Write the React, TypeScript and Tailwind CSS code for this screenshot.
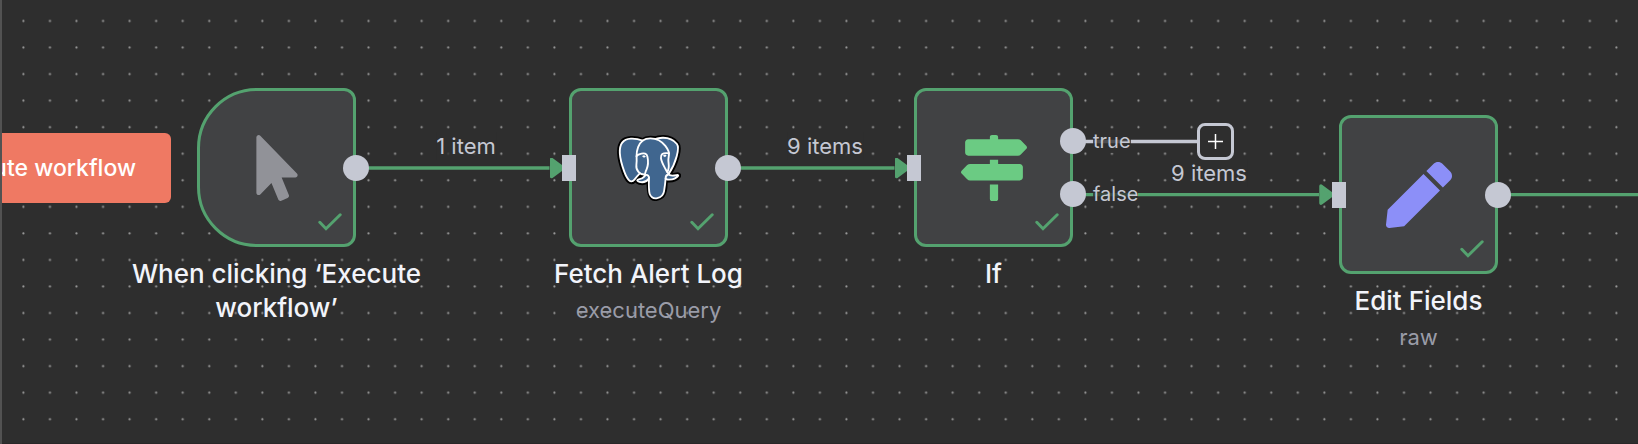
import type { ReactNode } from 'react';
import { FaMapSigns, FaMousePointer, FaPen } from 'react-icons/fa';

function PostgresIcon() {
  return (
    <svg viewBox="0 0 432 445" className="h-[66px] w-16" aria-hidden="true">
      <path
        fill="#000"
        stroke="#000"
        strokeWidth="37.4"
        d="M323.205,324.227c2.833-23.601,1.984-27.062,19.563-23.239l4.463,0.392c13.517,0.615,31.199-2.174,41.587-7c22.362-10.376,35.622-27.7,13.572-23.148c-50.297,10.376-53.755-6.655-53.755-6.655c53.111-78.803,75.313-178.836,56.149-203.322C352.514-5.534,262.036,26.049,260.522,26.869l-0.482,0.089c-9.938-2.062-21.06-3.294-33.554-3.496c-22.761-0.374-40.032,5.967-53.133,15.904c0,0-161.408-66.498-153.899,83.628c1.597,31.936,45.777,241.655,98.47,178.31c19.259-23.163,37.871-42.748,37.871-42.748c9.242,6.14,20.307,9.272,31.912,8.147l0.897-0.765c-0.281,2.876-0.157,5.689,0.359,9.019c-13.572,15.167-9.584,17.83-36.723,23.416c-27.457,5.659-11.326,15.734-0.797,18.367c12.768,3.193,42.305,7.716,62.268-20.224l-0.795,3.188c5.325,4.26,4.965,30.619,5.72,49.452c0.756,18.834,2.017,36.409,5.856,46.771c3.839,10.36,8.369,37.05,44.036,29.406c29.809-6.388,52.6-15.582,54.677-101.107"
      />
      <path
        fill="#40668f"
        d="M402.395,271.23c-50.302,10.376-53.76-6.655-53.76-6.655c53.111-78.808,75.313-178.843,56.153-203.326c-52.27-66.785-142.752-35.2-144.262-34.38l-0.486,0.087c-9.938-2.063-21.06-3.292-33.56-3.496c-22.761-0.373-40.026,5.967-53.127,15.902c0,0-161.411-66.495-153.904,83.63c1.597,31.938,45.776,241.657,98.471,178.312c19.26-23.163,37.869-42.748,37.869-42.748c9.243,6.14,20.308,9.272,31.908,8.147l0.901-0.765c-0.28,2.876-0.152,5.689,0.361,9.019c-13.575,15.167-9.586,17.83-36.723,23.416c-27.459,5.659-11.328,15.734-0.796,18.367c12.768,3.193,42.307,7.716,62.266-20.224l-0.796,3.188c5.319,4.26,9.054,27.711,8.428,48.969c-0.626,21.259-1.044,35.854,3.147,47.254c4.191,11.4,8.368,37.05,44.042,29.406c29.809-6.388,45.256-22.942,47.405-50.555c1.525-19.631,4.976-16.729,5.194-34.28l2.768-8.309c3.192-26.611,0.507-35.196,18.872-31.203l4.463,0.392c13.517,0.615,31.208-2.174,41.591-7c22.358-10.376,35.618-27.7,13.573-23.148z"
      />
      <g fill="none" stroke="#fff" strokeWidth="12.5" strokeLinecap="round" strokeLinejoin="round">
        <path d="M215.866,286.484c-1.385,49.516,0.348,99.377,5.193,111.495c4.848,12.118,15.223,35.688,50.9,28.045c29.806-6.39,40.651-18.756,45.357-46.051c3.466-20.082,10.148-75.854,11.005-87.281" />
        <path d="M173.104,38.256c0,0-161.521-66.016-154.012,84.109c1.597,31.938,45.779,241.664,98.473,178.316c19.256-23.166,36.671-41.335,36.671-41.335" />
        <path d="M260.349,26.207c-5.591,1.753,89.848-34.889,144.087,34.417c19.159,24.484-3.043,124.519-56.153,203.329" />
        <path d="M348.282,263.953c0,0,3.461,17.036,53.764,6.653c22.04-4.552,8.776,12.774-13.577,23.155c-18.345,8.514-59.474,10.696-60.146-1.069c-1.729-30.355,21.647-21.133,19.96-28.739c-1.525-6.85-11.979-13.573-18.894-30.338c-6.037-14.633-82.796-126.849,21.287-110.183c3.813-0.789-27.146-99.002-124.553-100.599c-97.385-1.597-94.19,119.762-94.19,119.762" />
        <path d="M188.604,274.334c-13.577,15.166-9.584,17.829-36.723,23.417c-27.459,5.66-11.326,15.733-0.797,18.365c12.768,3.195,42.307,7.718,62.266-20.229c6.078-8.509-0.036-22.086-8.385-25.547c-4.034-1.671-9.428-3.765-16.361,3.994z" />
        <path d="M187.715,274.069c-1.368-8.917,2.93-19.528,7.536-31.942c6.922-18.626,22.893-37.255,10.117-96.339c-9.523-44.029-73.396-9.163-73.436-3.193c-0.039,5.968,2.889,30.26-1.067,58.548c-5.162,36.913,23.488,68.132,56.479,64.938" />
        <path d="M350.676,123.432c0.863,15.994-3.445,26.888-3.988,43.914c-0.804,24.748,11.799,53.074-7.191,81.435" />
      </g>
      <g fill="#fff" stroke="#fff" strokeWidth="4">
        <path d="M172.517,141.7c-0.288,2.039,3.733,7.48,8.976,8.207c5.234,0.73,9.714-3.522,9.998-5.559c0.284-2.039-3.732-4.285-8.977-5.015c-5.237-0.731-9.719,0.333-9.996,2.367z" />
        <path d="M331.941,137.543c0.284,2.039-3.732,7.48-8.976,8.207c-5.238,0.73-9.718-3.522-10.005-5.559c-0.277-2.039,3.74-4.285,8.979-5.015c5.239-0.73,9.718,0.333,10.002,2.368z" />
      </g>
    </svg>
  );
}

function CheckIcon() {
  return (
    <svg
      viewBox="0 0 24 18"
      className="absolute right-[11px] bottom-[13px] h-[18px] w-6"
      fill="none"
      stroke="#54a26f"
      strokeWidth="3"
      strokeLinecap="round"
      aria-label="Success"
    >
      <path d="M1.8 9.3 8 15.7 22.2 1.8" />
    </svg>
  );
}

type NodeProps = {
  place: string;
  title: string;
  subtitle?: string;
  shape?: string;
  hasInput?: boolean;
  outputs: string[];
  children: ReactNode;
};

function WorkflowNode({ place, title, subtitle, shape = 'rounded-xl', hasInput = true, outputs, children }: NodeProps) {
  return (
    <article className={`absolute flex w-[159px] flex-col items-center ${place}`}>
      <div
        className={`relative flex size-[159px] items-center justify-center border-3 border-[#54a26f] bg-[#414244] ${shape}`}
      >
        {children}
        <CheckIcon />
        {hasInput && <span className="absolute top-16 -left-2.5 h-[26px] w-3.5 bg-[#c5c8d3]" />}
        {outputs.map((output) => (
          <span key={output} className={`absolute -right-4 size-[26px] rounded-full bg-[#c5c8d3] ${output}`} />
        ))}
      </div>
      <h2 className="mt-2.5 w-[310px] text-center text-[26px] leading-[34px] font-medium text-[#f2f4fa]">{title}</h2>
      {subtitle && <p className="mt-[5px] text-[22px] leading-7 text-[#9a9ca8]">{subtitle}</p>}
    </article>
  );
}

function EdgeLabel({ place, children }: { place: string; children: ReactNode }) {
  return (
    <span
      className={`absolute -translate-x-1/2 bg-[#2e2e2e]/80 text-[22px] leading-7 whitespace-nowrap text-[#c5c8d3] ${place}`}
    >
      {children}
    </span>
  );
}

function PortLabel({ place, children }: { place: string; children: ReactNode }) {
  return (
    <span className={`absolute left-[1091px] bg-[#2e2e2e]/80 text-xl leading-6 text-[#c5c8d3] ${place}`}>
      {children}
    </span>
  );
}

function Edges() {
  return (
    <svg className="absolute inset-0 size-full" aria-hidden="true">
      <defs>
        <pattern id="dots" x="8.2" y="7.8" width="26.55" height="26.55" patternUnits="userSpaceOnUse">
          <circle cx="13.2" cy="13.2" r="1.1" fill="#9a9a9a" />
        </pattern>
        <marker
          id="arrow"
          viewBox="0 0 16 21"
          markerWidth="16"
          markerHeight="21"
          markerUnits="userSpaceOnUse"
          refX="0"
          refY="10.5"
        >
          <path
            d="M2 2 13.5 10.5 2 19Z"
            fill="#54a26f"
            stroke="#54a26f"
            strokeWidth="3.5"
            strokeLinejoin="round"
          />
        </marker>
      </defs>
      <rect width="100%" height="100%" fill="url(#dots)" />
      <g stroke="#54a26f" strokeWidth="3.3">
        <path d="M354 168H547.5" markerEnd="url(#arrow)" />
        <path d="M726 168H892.5" markerEnd="url(#arrow)" />
        <path d="M1071 194.6H1317" markerEnd="url(#arrow)" />
        <line x1="1495" y1="194.6" x2="100%" y2="194.6" />
      </g>
      <path d="M1071 141.5H1197" stroke="#c5c8d3" strokeWidth="3.3" />
    </svg>
  );
}

export default function App() {
  return (
    <div className="flex h-screen bg-[#2e2e2e] font-['Inter',sans-serif]">
      <div className="w-0.5 shrink-0 bg-[#525252]" />
      <main className="relative flex-1 overflow-hidden border-b border-[#292728]">
        <Edges />

        <button
          type="button"
          className="absolute top-[133px] -left-[100px] flex h-[70px] w-[269px] items-center justify-end rounded-md bg-[#ef7963] pr-[35px] text-[23px] font-medium whitespace-nowrap text-white"
        >
          Execute workflow
        </button>

        <WorkflowNode
          place="left-[195px] top-[88px]"
          title="When clicking ‘Execute workflow’"
          shape="rounded-l-[60px] rounded-r-xl"
          hasInput={false}
          outputs={['top-16']}
        >
          <FaMousePointer className="size-[66px] text-[#919298]" />
        </WorkflowNode>
        <WorkflowNode
          place="left-[567px] top-[88px]"
          title="Fetch Alert Log"
          subtitle="executeQuery"
          outputs={['top-16']}
        >
          <PostgresIcon />
        </WorkflowNode>
        <WorkflowNode place="left-[912px] top-[88px]" title="If" outputs={['top-[37px]', 'top-[90px]']}>
          <FaMapSigns className="size-[66px] text-[#6bcb83]" />
        </WorkflowNode>
        <WorkflowNode place="left-[1337px] top-[115px]" title="Edit Fields" subtitle="raw" outputs={['top-16']}>
          <FaPen className="size-[66px] text-[#8c8ff8]" />
        </WorkflowNode>

        <EdgeLabel place="left-[464px] top-[132px]">1 item</EdgeLabel>
        <EdgeLabel place="left-[823px] top-[132px]">9 items</EdgeLabel>
        <EdgeLabel place="left-[1207px] top-[159px]">9 items</EdgeLabel>
        <PortLabel place="top-[129px]">true</PortLabel>
        <PortLabel place="top-[182px]">false</PortLabel>

        <button
          type="button"
          aria-label="Add node"
          className="absolute top-[123px] left-[1195px] flex size-[37px] items-center justify-center rounded-lg border-3 border-[#c5c8d3] bg-[#2e2e2e]"
        >
          <svg viewBox="0 0 15 15" className="size-[15px]" stroke="#fff" strokeWidth="1.5" aria-hidden="true">
            <path d="M7.5 0V15M0 7.5H15" />
          </svg>
        </button>
      </main>
    </div>
  );
}
